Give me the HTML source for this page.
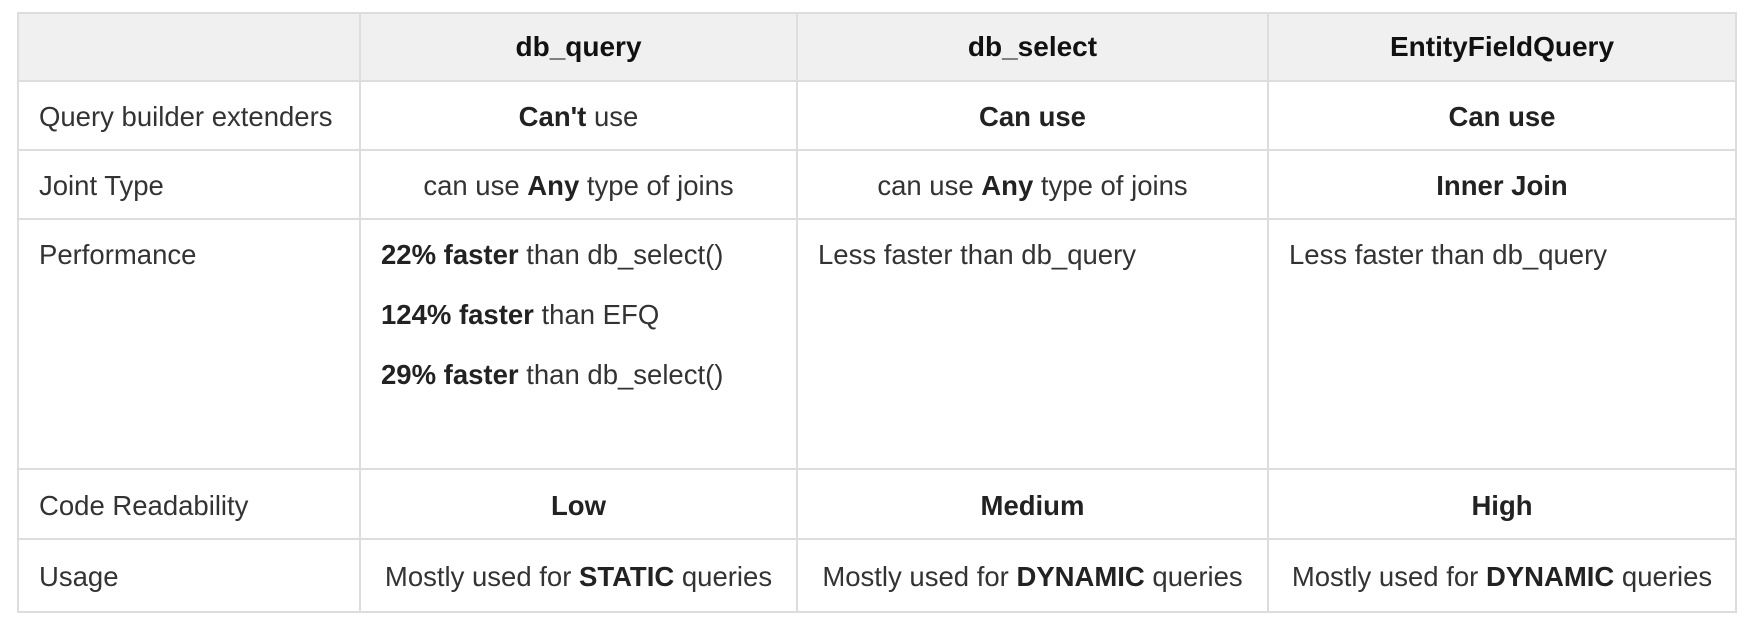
<!DOCTYPE html>
<html><head><meta charset="utf-8"><style>
html,body{margin:0;padding:0;background:#fff;width:1758px;height:624px;overflow:hidden}
table{position:absolute;left:17px;top:12px;border-collapse:collapse;table-layout:fixed;font-family:"Liberation Sans",Arial,sans-serif;font-size:27.5px;color:#333}
td,th{border:2px solid #ddd;padding:0 20px;vertical-align:middle;white-space:nowrap;overflow:visible}
th{background:#f0f0f0;color:#111;font-weight:bold;text-align:center;height:66px;font-size:28px}
td{height:64px;padding-top:3px}
td.c{text-align:center;padding-left:6px;padding-right:6px}
tr.perf td{vertical-align:top;height:245px}
tr.cr td{height:65px}
tr.last td{height:68px}
.p{line-height:28px;margin-top:18px}
.p+.p{margin-top:32px}
b{color:#222}
</style></head><body>
<table>
<colgroup><col style="width:342px"><col style="width:437px"><col style="width:471px"><col style="width:468px"></colgroup>
<tr><th></th><th>db_query</th><th>db_select</th><th>EntityFieldQuery</th></tr>
<tr><td>Query builder extenders</td><td class="c"><b>Can't</b> use</td><td class="c"><b>Can use</b></td><td class="c"><b>Can use</b></td></tr>
<tr><td>Joint Type</td><td class="c">can use <b>Any</b> type of joins</td><td class="c">can use <b>Any</b> type of joins</td><td class="c"><b>Inner Join</b></td></tr>
<tr class="perf"><td><div class="p">Performance</div></td><td><div class="p"><b>22% faster</b> than db_select()</div><div class="p"><b>124% faster</b> than EFQ</div><div class="p"><b>29% faster</b> than db_select()</div></td><td><div class="p">Less faster than db_query</div></td><td><div class="p">Less faster than db_query</div></td></tr>
<tr class="cr"><td>Code Readability</td><td class="c"><b>Low</b></td><td class="c"><b>Medium</b></td><td class="c"><b>High</b></td></tr>
<tr class="last"><td>Usage</td><td class="c">Mostly used for <b>STATIC</b> queries</td><td class="c">Mostly used for <b>DYNAMIC</b> queries</td><td class="c">Mostly used for <b>DYNAMIC</b> queries</td></tr>
</table>
</body></html>
